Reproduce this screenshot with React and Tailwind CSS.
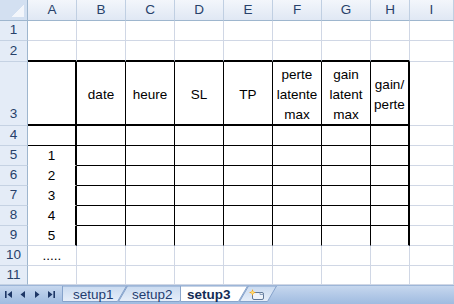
import React from "react";

const COLS = ["A", "B", "C", "D", "E", "F", "G", "H", "I"];
const ROWS = [1, 2, 3, 4, 5, 6, 7, 8, 9, 10, 11];

const gridR = "border-r border-r-[#d0d7e5]";
const blackR = "border-r border-r-black";
const thickR = "border-r-2 border-r-black";
const gridB = "border-b border-b-[#d0d7e5]";
const blackB = "border-b border-b-black";
const thickB = "border-b-2 border-b-black";
const whiteB = "border-b border-b-white";

const headerText = {
  B: ["date"],
  C: ["heure"],
  D: ["SL"],
  E: ["TP"],
  F: ["perte", "latente", "max"],
  G: ["gain", "latent", "max"],
  H: ["gain/", "perte"],
};

const colA = { 5: "1", 6: "2", 7: "3", 8: "4", 9: "5", 10: "....." };

function borders(r, c) {
  let right = gridR;
  let bottom = gridB;
  if (r >= 3 && r <= 9) {
    if (c === 0 || c === 7) right = thickR;
    else if (c < 7) right = blackR;
  }
  if ((r === 2 || r === 3) && c <= 7) bottom = thickB;
  if (r >= 4 && r <= 8 && c <= 7) {
    if (c === 0) bottom = r === 4 ? blackB : whiteB;
    else bottom = blackB;
  }
  return `${right} ${bottom}`;
}

function Cell({ r, c }) {
  const col = COLS[c];
  let content = null;
  if (r === 3 && headerText[col]) {
    content = (
      <div className="flex flex-col items-center pt-[4px] leading-5">
        {headerText[col].map((t) => (
          <span key={t}>{t}</span>
        ))}
      </div>
    );
  } else if (c === 0 && colA[r]) {
    content = <span className="pt-[1px]">{colA[r]}</span>;
  }
  return (
    <div className={`flex items-center justify-center bg-white text-black ${borders(r, c)}`}>
      {content}
    </div>
  );
}

function NavArrows() {
  return (
    <svg width="60" height="16" viewBox="0 0 60 16" className="shrink-0">
      <g fill="#1e3766">
        <rect x="5" y="5" width="1.6" height="7" />
        <polygon points="12,5 7.5,8.5 12,12" />
        <polygon points="25,5 20.5,8.5 25,12" />
        <polygon points="35,5 39.5,8.5 35,12" />
        <polygon points="48,5 52.5,8.5 48,12" />
        <rect x="53.4" y="5" width="1.6" height="7" />
      </g>
    </svg>
  );
}

function Tab({ w, points, active, pad, children, className = "" }) {
  return (
    <div className={`relative flex h-[16px] shrink-0 items-center ${className}`} style={{ width: w }}>
      <svg className="absolute inset-0" width={w} height="16" viewBox={`0 0 ${w} 16`}>
        <defs>
          <linearGradient id="tabg" x1="0" y1="0" x2="0" y2="1">
            <stop offset="0" stopColor="#c9daf0" />
            <stop offset="1" stopColor="#e6eef9" />
          </linearGradient>
        </defs>
        <polygon
          points={points}
          fill={active ? "#ffffff" : "url(#tabg)"}
          stroke={active ? "#8ba6cc" : "#86a3cb"}
          strokeWidth="1"
        />
      </svg>
      <span
        className={`relative ${pad} text-[13.5px] leading-none ${active ? "font-bold text-[#132c55]" : "text-[#1f3d70]"}`}
      >
        {children}
      </span>
    </div>
  );
}

function NewSheetIcon() {
  return (
    <svg width="16" height="12" viewBox="0 0 16 12">
      <rect x="3.5" y="3.5" width="11" height="7" rx="1.5" fill="#eef3fa" stroke="#5f7797" />
      <path d="M11 3.5 v2 h3.5" fill="none" stroke="#8ea3bf" />
      <g fill="#f5a623">
        <polygon points="3.5,0 4.4,2.4 7,3.5 4.4,4.6 3.5,7 2.6,4.6 0,3.5 2.6,2.4" />
      </g>
      <circle cx="3.5" cy="3.5" r="1.3" fill="#ffe27a" />
    </svg>
  );
}

export default function App() {
  return (
    <div className="h-[304px] w-[454px] overflow-hidden bg-white font-['Liberation_Sans',Arial,sans-serif] text-[13.5px]">
      <div className="grid h-[285px] grid-cols-[28px_49px_49px_49px_49px_49px_49px_49px_39px_1fr] grid-rows-[21px_20px_21px_64px_20px_20px_20px_20px_20px_20px_20px_19px] overflow-hidden">
        {/* corner */}
        <div className="flex items-end justify-end border-r border-b border-r-[#9eb6ce] border-b-[#9eb6ce] bg-[#d3e0f1] p-[3px]">
          <div className="h-[12px] w-[12px] bg-linear-to-br from-[#d3e0f1] from-50% to-[#f3f6fb] to-50%" />
        </div>
        {COLS.map((c) => (
          <div
            key={c}
            className="flex items-center justify-center border-r border-b border-r-[#c0cfe2] border-b-[#9eb6ce] bg-linear-to-b from-[#f3f6fb] to-[#e0e8f4] text-[#27416a]"
          >
            {c}
          </div>
        ))}
        {ROWS.map((r) => (
          <React.Fragment key={r}>
            <div
              className={`flex justify-center border-r border-b border-r-[#9eb6ce] border-b-[#c5d2e3] bg-[#e4ecf7] text-[#27416a] ${
                r === 3 ? "items-end pb-[1px]" : "items-center"
              }`}
            >
              {r}
            </div>
            {COLS.map((c, i) => (
              <Cell key={c} r={r} c={i} />
            ))}
          </React.Fragment>
        ))}
      </div>

      {/* sheet tabs bar */}
      <div className="flex h-[19px] items-start border-t border-t-[#9db6d8] bg-linear-to-b from-[#c6d7ee] to-[#9fbbe0]">
        <NavArrows />
        <div className="ml-[2px] flex items-start">
          <Tab w={65} points="0.5,0 64.5,0 55.5,15.5 0.5,15.5" pad="pl-[11px] pt-[2px]">
            setup1
          </Tab>
          <Tab w={71} points="0.5,15.5 9.5,0 70.5,0 61.5,15.5" pad="pl-[14px] pt-[2px]" className="-ml-[9px]">
            setup2
          </Tab>
          <Tab w={68} points="0.5,0 67.5,0 58.5,15.5 0.5,15.5" pad="pl-[7px] pt-[2px]" active className="z-10 -ml-[9px]">
            setup3
          </Tab>
          <Tab w={38} points="0.5,15.5 9.5,0 37.5,0 28.5,15.5" pad="pl-[10px] pt-[2px]" className="-ml-[9px]">
            <NewSheetIcon />
          </Tab>
        </div>
      </div>
    </div>
  );
}
